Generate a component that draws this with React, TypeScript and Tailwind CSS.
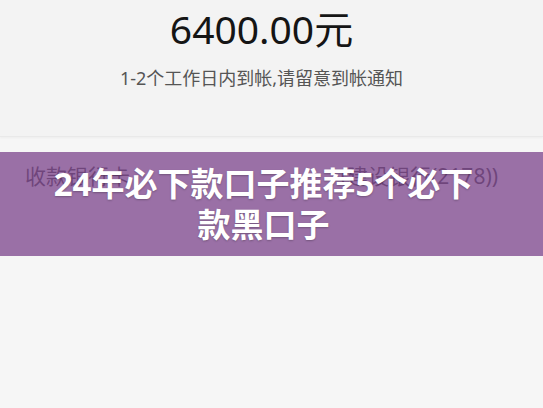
import React from "react";

const font = { fontFamily: '"Noto Sans", "Noto Sans CJK SC", sans-serif' };

const App = () => {
  return (
    <div className="relative w-[543px] h-[408px] overflow-hidden bg-[#f6f6f6]" style={font}>
      {/* amount block */}
      <div className="h-[137px] bg-[#f3f3f3] flex flex-col items-center pr-[20px] border-b border-[#e9e9e9] shadow-[0_1px_2px_rgba(0,0,0,0.04)]">
        <div className="mt-[3px] text-[39px] leading-[52px] text-[#151515]">6400.00元</div>
        <div className="mt-[11px] text-[18px] leading-[24px] text-[#555555]">1-2个工作日内到帐,请留意到帐通知</div>
      </div>

      {/* bank row */}
      <div className="flex items-center justify-between pl-[25px] pr-[45px] h-[80px] text-[21px] text-[#1e1e1e]">
        <span>收款银行卡</span>
        <span>(建设银行(2178))</span>
      </div>

      {/* title overlay */}
      <div className="absolute left-0 right-0 top-[152px] h-[104px] pr-[16px] bg-[rgba(131,79,146,0.8)] flex items-center justify-center">
        <div className="w-[430px] text-center text-white font-bold text-[33px] leading-[41px] [text-shadow:0_1px_2px_rgba(0,0,0,0.25)]">
          24年必下款口子推荐5个必下款黑口子
        </div>
      </div>
    </div>
  );
};

export default App;
